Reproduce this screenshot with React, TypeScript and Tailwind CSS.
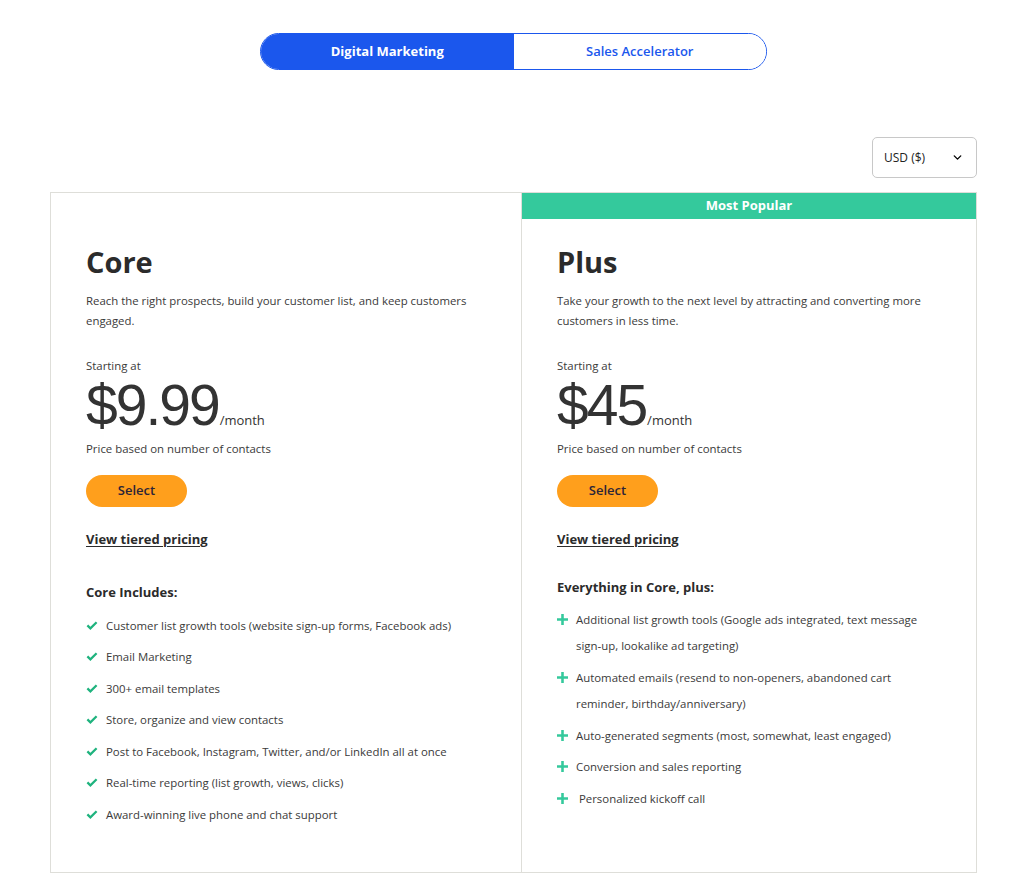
import { ChevronDown } from 'lucide-react';

const coreFeatures = [
  'Customer list growth tools (website sign-up forms, Facebook ads)',
  'Email Marketing',
  '300+ email templates',
  'Store, organize and view contacts',
  'Post to Facebook, Instagram, Twitter, and/or LinkedIn all at once',
  'Real-time reporting (list growth, views, clicks)',
  'Award-winning live phone and chat support',
];

const plusFeatures = [
  'Additional list growth tools (Google ads integrated, text message sign\u2011up, lookalike ad targeting)',
  'Automated emails (resend to non-openers, abandoned cart reminder, birthday/anniversary)',
  'Auto-generated segments (most, somewhat, least engaged)',
  'Conversion and sales reporting',
  '\u00a0Personalized kickoff call',
];

function CheckIcon() {
  return (
    <svg viewBox="0 0 12 10" className="w-[12px] h-[10px] shrink-0 mt-[8px]">
      <path d="M0.6 5.2 L2.2 3.6 L4.4 5.8 L9.8 0.4 L11.4 2 L4.4 9 Z" fill="#1fb37e" />
    </svg>
  );
}

function PlusIcon() {
  return (
    <svg viewBox="0 0 12 12" className="w-[11px] h-[11px] shrink-0 mt-[7px]">
      <path d="M4.6 0 H7.4 V4.6 H12 V7.4 H7.4 V12 H4.6 V7.4 H0 V4.6 H4.6 Z" fill="#34c99c" />
    </svg>
  );
}

function PlanHead({ name, desc, price }: { name: string; desc: string; price: string }) {
  return (
    <>
      <h2 className="text-[29px] leading-[34px] font-bold text-[#2b2b2b] mt-[52px]">{name}</h2>
      <p className="text-[11.4px] leading-[20px] text-[#3a3a3a] mt-[12px]">{desc}</p>
      <p className="text-[11.4px] leading-[16px] text-[#3a3a3a] mt-[27px]">Starting at</p>
      <div className="flex items-baseline text-[#333]">
        <span className="text-[57px] leading-[62px] font-['Liberation_Sans',Arial,sans-serif] tracking-[-2px]">{price}</span>
        <span className="text-[13px] ml-[1px]">/month</span>
      </div>
      <p className="text-[11.4px] leading-[16px] text-[#3a3a3a] mt-[5px]">Price based on number of contacts</p>
      <button className="mt-[18px] w-[101px] h-[32px] rounded-full bg-[#ff9f1c] text-[13px] font-semibold text-[#2b2438]">
        Select
      </button>
      <a className="block mt-[23px] text-[13px] font-bold text-[#2b2b2b] underline underline-offset-2">
        View tiered pricing
      </a>
    </>
  );
}

export default function App() {
  return (
    <div className="min-h-screen bg-white font-['Open_Sans',sans-serif] text-[#2b2b2b]">
      <div className="w-[927px] ml-[50px]">
        <div className="pt-[33px] flex justify-center">
          <div className="flex w-[507px] h-[37px] rounded-full border border-[#1b57ed] overflow-hidden">
            <div className="flex-1 bg-[#1b57ed] text-white text-[13px] font-bold flex items-center justify-center">
              Digital Marketing
            </div>
            <div className="flex-1 bg-white text-[#1b57ed] text-[13px] font-semibold flex items-center justify-center">
              Sales Accelerator
            </div>
          </div>
        </div>

        <div className="flex justify-end mt-[67px]">
          <div className="w-[105px] h-[41px] border border-[#c8c8c8] rounded-[5px] flex items-center justify-between pl-[11px] pr-[12px]">
            <span className="text-[12px] text-[#222]">USD ($)</span>
            <ChevronDown className="w-[13px] h-[13px] text-black" strokeWidth={2.5} />
          </div>
        </div>

        <div className="mt-[14px] grid grid-cols-[471px_1fr] border border-[#deded9] h-[681px]">
          <div className="border-r border-[#deded9] pl-[35px] pr-[20px]">
            <PlanHead
              name="Core"
              desc="Reach the right prospects, build your customer list, and keep customers engaged."
              price="$9.99"
            />
            <h3 className="text-[13px] font-bold mt-[32px] leading-[20px]">Core Includes:</h3>
            <ul className="mt-[11px] flex flex-col gap-[5.5px]">
              {coreFeatures.map((f) => (
                <li key={f} className="flex gap-[8px] text-[11.4px] leading-[26px] text-[#3a3a3a]">
                  <CheckIcon />
                  <span>{f}</span>
                </li>
              ))}
            </ul>
          </div>

          <div className="relative pl-[35px] pr-[50px]">
            <div className="absolute top-0 left-0 right-0 h-[26px] bg-[#34c99c] text-white text-[13px] font-bold flex items-center justify-center">
              Most Popular
            </div>
            <PlanHead
              name="Plus"
              desc="Take your growth to the next level by attracting and converting more customers in less time."
              price="$45"
            />
            <h3 className="text-[13px] font-bold mt-[27px] leading-[20px]">Everything in Core, plus:</h3>
            <ul className="mt-[10px] flex flex-col gap-[5px]">
              {plusFeatures.map((f) => (
                <li key={f} className="flex gap-[8px] text-[11.4px] leading-[26.5px] text-[#3a3a3a]">
                  <PlusIcon />
                  <span>{f}</span>
                </li>
              ))}
            </ul>
          </div>
        </div>
      </div>
    </div>
  );
}
